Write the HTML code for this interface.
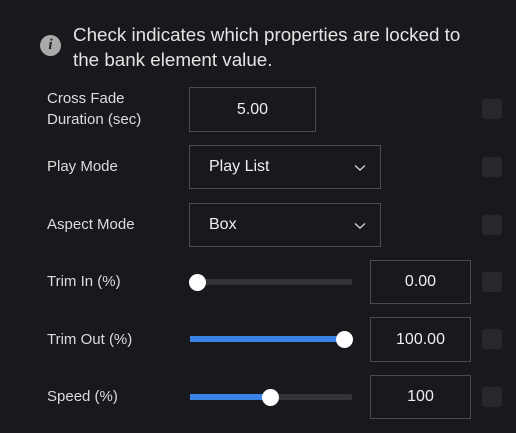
<!DOCTYPE html>
<html><head><style>
*{margin:0;padding:0;box-sizing:border-box}
body{width:516px;height:433px;background:#18191d;font-family:"Liberation Sans",sans-serif;color:#e6e6e6;position:relative;overflow:hidden}
.a{position:absolute}
.lbl{position:absolute;left:47px;font-size:15px;color:#dcdcdc;line-height:21px}
.box{position:absolute;border:1px solid #4a4b4e;background:#18191d;font-size:16px;color:#eee}
.num{text-align:center}
.cb{position:absolute;left:482px;width:20px;height:20px;background:#26282b;border-radius:3px}
.trk{position:absolute;left:190px;width:162px;height:6px;background:#333437;border-radius:1px}
.fill{position:absolute;left:0;top:0;height:6px;background:#3b82e8}
.th{position:absolute;width:17px;height:17px;border-radius:50%;background:#fff;top:-6px}
</style></head><body>
<div class="a" style="left:40px;top:35px;width:21px;height:21px;border-radius:50%;background:#a9a9a9;color:#222;font:italic bold 15px 'Liberation Serif',serif;text-align:center;line-height:21px">i</div>
<div class="a" style="left:73px;top:22px;font-size:18.8px;line-height:25px;color:#e4e4e4;white-space:nowrap">Check indicates which properties are locked to<br>the bank element value.</div>

<div class="lbl" style="top:88px">Cross Fade<br>Duration (sec)</div>
<div class="box num" style="left:189px;top:87px;width:127px;height:45px;line-height:43px">5.00</div>
<div class="cb" style="top:99px"></div>

<div class="lbl" style="top:156px">Play Mode</div>
<div class="box" style="left:189px;top:145px;width:192px;height:44px;line-height:42px;padding-left:19px">Play List<svg class="a" style="left:164px;top:18px" width="12" height="8" viewBox="0 0 12 8"><path d="M1 1.5 6 6 11 1.5" fill="none" stroke="#ccc" stroke-width="1.4"/></svg></div>
<div class="cb" style="top:157px"></div>

<div class="lbl" style="top:214px">Aspect Mode</div>
<div class="box" style="left:189px;top:203px;width:192px;height:44px;line-height:42px;padding-left:19px">Box<svg class="a" style="left:164px;top:18px" width="12" height="8" viewBox="0 0 12 8"><path d="M1 1.5 6 6 11 1.5" fill="none" stroke="#ccc" stroke-width="1.4"/></svg></div>
<div class="cb" style="top:215px"></div>

<div class="lbl" style="top:271px">Trim In (%)</div>
<div class="trk" style="top:279px"><div class="th" style="left:-1px;top:-5.5px"></div></div>
<div class="box num" style="left:370px;top:260px;width:101px;height:44px;line-height:42px">0.00</div>
<div class="cb" style="top:272px"></div>

<div class="lbl" style="top:329px">Trim Out (%)</div>
<div class="trk" style="top:336px"><div class="fill" style="width:160px"></div><div class="th" style="left:146px;top:-5.5px"></div></div>
<div class="box num" style="left:370px;top:317px;width:101px;height:45px;line-height:43px">100.00</div>
<div class="cb" style="top:329px"></div>

<div class="lbl" style="top:386px">Speed (%)</div>
<div class="trk" style="top:394px"><div class="fill" style="width:80px"></div><div class="th" style="left:72px;top:-5.5px"></div></div>
<div class="box num" style="left:370px;top:375px;width:101px;height:44px;line-height:42px">100</div>
<div class="cb" style="top:387px"></div>
</body></html>
